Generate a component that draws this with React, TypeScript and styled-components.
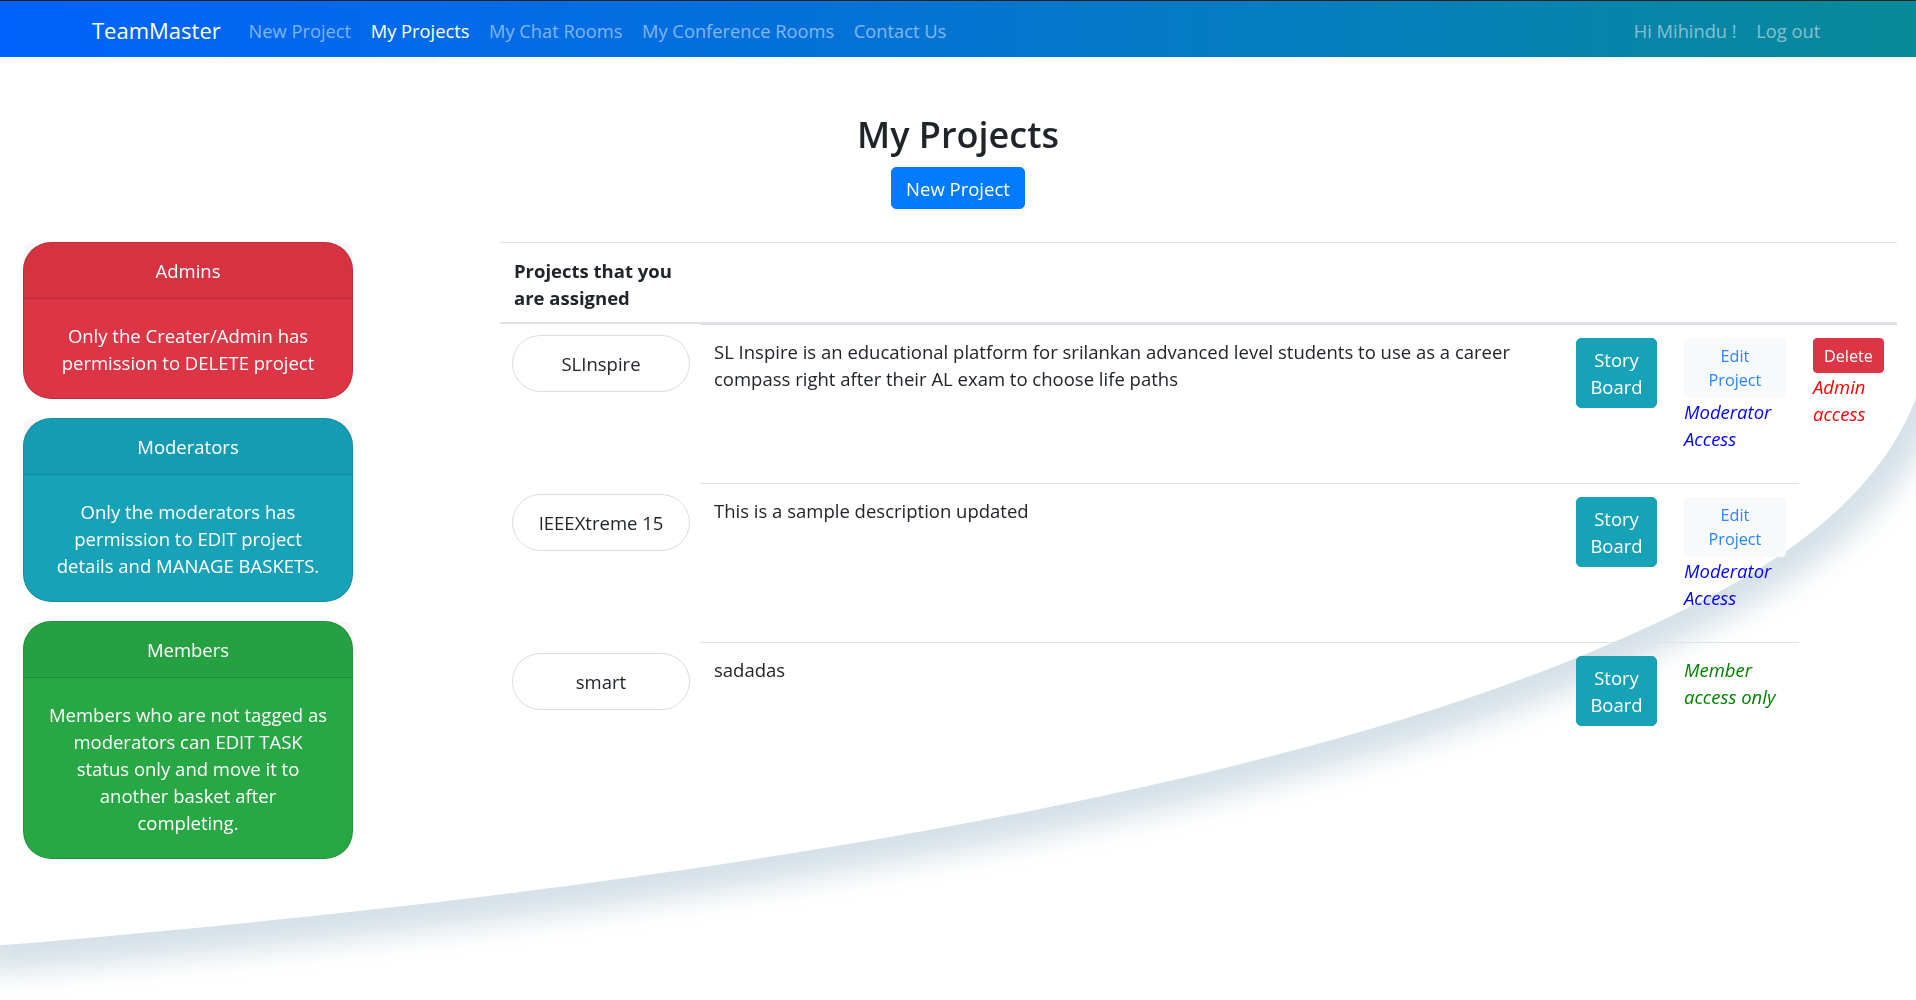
import React from 'react'
import styled, { createGlobalStyle } from 'styled-components'

const GlobalStyle = createGlobalStyle`
  html, body {
    margin: 0;
    padding: 0;
    background: #fff;
    overflow: hidden;
  }
  body {
    font-family: "Open Sans", "Noto Sans", "Liberation Sans", sans-serif;
    font-size: 18.5px;
    line-height: 27px;
    color: #212529;
  }
  * {
    box-sizing: border-box;
  }
`

type Project = {
  name: string
  description: string
  role: 'admin' | 'moderator' | 'member'
}

const projects: Project[] = [
  {
    name: 'SLInspire',
    description:
      'SL Inspire is an educational platform for srilankan advanced level students to use as a career compass right after their AL exam to choose life paths',
    role: 'admin',
  },
  { name: 'IEEEXtreme 15', description: 'This is a sample description updated', role: 'moderator' },
  { name: 'smart', description: 'sadadas', role: 'member' },
]

const curve = 'M-20,947 C500,905 1200,820 1600,648 C1730,592 1880,520 1922,380'

function Swoosh() {
  return (
    <Backdrop viewBox="0 0 1916 1000" preserveAspectRatio="none">
      <defs>
        <clipPath id="under-curve">
          <path d={curve + ' L1940,1010 L-20,1010 Z'} />
        </clipPath>
        <filter id="soft" x="-10%" y="-20%" width="120%" height="140%">
          <feGaussianBlur stdDeviation="15" />
        </filter>
      </defs>
      <g clipPath="url(#under-curve)">
        <path d={curve} fill="none" stroke="#d4dfe6" strokeWidth="52" filter="url(#soft)" />
      </g>
    </Backdrop>
  )
}

function App() {
  return (
    <Page>
      <GlobalStyle />
      <Swoosh />
      <Navbar>
        <Brand>TeamMaster</Brand>
        <NavLinks>
          <NavLink>New Project</NavLink>
          <NavLink $active>My Projects</NavLink>
          <NavLink>My Chat Rooms</NavLink>
          <NavLink>My Conference Rooms</NavLink>
          <NavLink>Contact Us</NavLink>
        </NavLinks>
        <NavLink>Hi Mihindu !</NavLink>
        <NavLink>Log out</NavLink>
      </Navbar>

      <Main>
        <TitleBlock>
          <Title>My Projects</Title>
          <PrimaryButton>New Project</PrimaryButton>
        </TitleBlock>

        <ContentRow>
          <Sidebar>
            <RoleCard $bg="#dc3545">
              <RoleHeader>Admins</RoleHeader>
              <RoleBody>Only the Creater/Admin has permission to DELETE project</RoleBody>
            </RoleCard>
            <RoleCard $bg="#17a2b8">
              <RoleHeader>Moderators</RoleHeader>
              <RoleBody>
                Only the moderators has permission to EDIT project details and MANAGE BASKETS.
              </RoleBody>
            </RoleCard>
            <RoleCard $bg="#28a745">
              <RoleHeader>Members</RoleHeader>
              <RoleBody>
                Members who are not tagged as
                <br />
                moderators can EDIT TASK
                <br />
                status only and move it to
                <br />
                another basket after
                <br />
                completing.
              </RoleBody>
            </RoleCard>
          </Sidebar>

          <ProjectTable>
            <HeadRow>
              <HeadCell>Projects that you are assigned</HeadCell>
              <HeadCell />
            </HeadRow>
            {projects.map((p) => (
              <BodyRow key={p.name}>
                <NameCell>
                  <NamePill>{p.name}</NamePill>
                </NameCell>
                <Cell>{p.description}</Cell>
                <Cell>
                  <StoryButton>Story Board</StoryButton>
                </Cell>
                {p.role === 'member' ? (
                  <Cell>
                    <AccessNote $color="#008000">Member access only</AccessNote>
                  </Cell>
                ) : (
                  <Cell>
                    <EditButton>Edit Project</EditButton>
                    <AccessNote $color="#0000ff">Moderator Access</AccessNote>
                  </Cell>
                )}
                {p.role === 'admin' && (
                  <Cell>
                    <DeleteButton>Delete</DeleteButton>
                    <AccessNote $color="#ff0000">Admin access</AccessNote>
                  </Cell>
                )}
              </BodyRow>
            ))}
          </ProjectTable>
        </ContentRow>
      </Main>
    </Page>
  )
}

export default App

const Page = styled.div`
  position: relative;
  min-height: 100vh;
`

const Backdrop = styled.svg`
  position: fixed;
  top: 0;
  left: 0;
  width: 100vw;
  height: 100vh;
  z-index: 0;
  pointer-events: none;
`

const Navbar = styled.nav`
  position: relative;
  z-index: 1;
  display: flex;
  align-items: center;
  height: 57px;
  padding: 3px 86px 0 92px;
  border-top: 1px solid #222;
  background: linear-gradient(90deg, #0062fb 0%, #0472d6 45%, #067fbb 72%, #098a98 100%);
`

const Brand = styled.span`
  color: #fff;
  font-size: 22px;
  margin-right: 18px;
  white-space: nowrap;
`

const NavLinks = styled.div`
  display: flex;
  flex: 1;
`

const NavLink = styled.a<{ $active?: boolean }>`
  padding: 0 9.8px;
  font-size: 18.3px;
  white-space: nowrap;
  cursor: pointer;
  color: ${(p) => (p.$active ? '#fff' : 'rgba(255, 255, 255, 0.5)')};
`

const Main = styled.main`
  position: relative;
  z-index: 1;
`

const TitleBlock = styled.div`
  display: flex;
  flex-direction: column;
  align-items: center;
  padding-top: 56px;
`

const Title = styled.h2`
  margin: 0;
  font-size: 36px;
  line-height: 44px;
  font-weight: 600;
  color: #212529;
`

const PrimaryButton = styled.button`
  margin-top: 10px;
  height: 42px;
  padding: 0 14px;
  border: 1px solid #007bff;
  border-radius: 5px;
  background: #007bff;
  color: #fff;
  font-family: inherit;
  font-size: 18.5px;
`

const ContentRow = styled.div`
  display: flex;
  align-items: flex-start;
  margin-top: 33px;
`

const Sidebar = styled.aside`
  display: flex;
  flex-direction: column;
  gap: 19px;
  width: 330px;
  margin-left: 23px;
`

const RoleCard = styled.div<{ $bg: string }>`
  background: ${(p) => p.$bg};
  border: 1px solid rgba(0, 0, 0, 0.125);
  border-radius: 28px;
  color: #fff;
  text-align: center;
`

const RoleHeader = styled.div`
  padding: 14px 20px;
  background: rgba(0, 0, 0, 0.03);
  border-bottom: 1px solid rgba(0, 0, 0, 0.125);
  border-radius: 5px 5px 0 0;
`

const RoleBody = styled.div`
  padding: 23px 22px 22px;
`

const ProjectTable = styled.div`
  display: flex;
  flex-direction: column;
  margin-left: 147px;
`

const columns = '200px 862px 108px 129px 98px'

const HeadRow = styled.div`
  display: grid;
  grid-template-columns: 200px 862px;
  border-top: 1px solid #dee2e6;
  border-bottom: 2px solid #dee2e6;
`

const HeadCell = styled.div`
  padding: 14px 14px 11px;
  font-weight: 700;
`

const BodyRow = styled.div`
  display: grid;
  grid-template-columns: ${columns};
  min-height: 159px;
`

const NameCell = styled.div`
  padding: 11px 10px 0 12px;
`

const Cell = styled.div`
  padding: 13px 14px;
  border-top: 1px solid #dee2e6;
`

const NamePill = styled.div`
  display: flex;
  align-items: center;
  justify-content: center;
  width: 178px;
  height: 57px;
  border: 1px solid #dcdcdc;
  border-radius: 29px;
  background: #fff;
  color: #212529;
`

const StoryButton = styled.button`
  width: 81px;
  padding: 7px 0;
  border: 1px solid #17a2b8;
  border-radius: 5px;
  background: #17a2b8;
  color: #fff;
  font-family: inherit;
  font-size: 18.5px;
  line-height: 27px;
`

const EditButton = styled.button`
  display: block;
  width: 102px;
  padding: 5px 20px;
  border: 1px solid #f8f9fa;
  border-radius: 4px;
  background: #f8f9fa;
  color: #2a85fb;
  font-family: inherit;
  font-size: 16.2px;
  line-height: 24px;
`

const DeleteButton = styled.button`
  display: block;
  padding: 4.5px 10px;
  border: 1px solid #dc3545;
  border-radius: 4px;
  background: #dc3545;
  color: #fff;
  font-family: inherit;
  font-size: 16.2px;
  line-height: 24px;
`

const AccessNote = styled.p<{ $color: string }>`
  margin: 0;
  font-style: italic;
  color: ${(p) => p.$color};
`
